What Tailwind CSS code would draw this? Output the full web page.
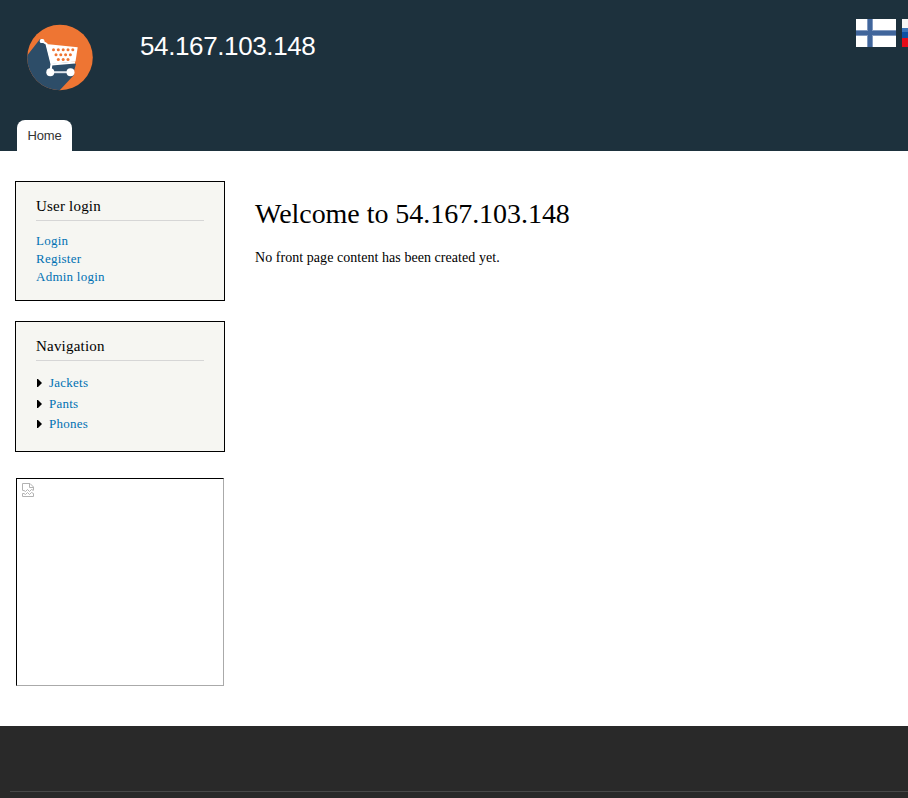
<!DOCTYPE html>
<html lang="en">
<head>
<meta charset="utf-8">
<title>54.167.103.148</title>
<script src="https://cdn.jsdelivr.net/npm/@tailwindcss/browser@4"></script>
</head>
<body class="w-[908px] h-[798px] overflow-hidden bg-white text-black font-['Liberation_Serif',serif]">
<header class="h-[151px] bg-[#1d313d] flex flex-col justify-between overflow-hidden font-['Liberation_Sans',sans-serif]">
  <div class="flex items-start">
    <svg class="w-[90px] h-[85px] ml-[15px] mt-[15px] shrink-0" viewBox="0 0 90 85">
      <defs><clipPath id="disc"><circle cx="45" cy="42.5" r="32.8"/></clipPath></defs>
      <circle cx="45" cy="42.5" r="32.8" fill="#ee7533"/>
      <path clip-path="url(#disc)" fill="#2d4d68" d="M11 42 25 24 59 48 61 49 59 56 59 60 44 76 30 80 5 70Z"/>
      <path fill="#fff" d="M31 29 62.700 32.300 60.500 46.500 36 49Z"/>
      <path fill="none" stroke="#fff" stroke-width="2" d="M26 25.500 31.500 29 36.500 49 35.500 56M36.500 49.500 60 47.500"/>
      <path stroke="#dfe5ec" stroke-width="2" d="M36 57.200H56"/>
      <rect x="24.800" y="24" width="4.500" height="4" rx="1.500" fill="#fff"/>
      <circle cx="35.300" cy="57.300" r="4" fill="#fff"/><circle cx="55.500" cy="57.300" r="4" fill="#fff"/>
      <g fill="#ee7533"><circle cx="38.500" cy="34.800" r="1.500"/><circle cx="43.300" cy="34.800" r="1.500"/><circle cx="48.200" cy="34.800" r="1.500"/><circle cx="53" cy="34.800" r="1.500"/><circle cx="57.800" cy="34.800" r="1.500"/><circle cx="41" cy="39.700" r="1.500"/><circle cx="45.800" cy="39.700" r="1.500"/><circle cx="50.600" cy="39.700" r="1.500"/><circle cx="55.400" cy="39.700" r="1.500"/><circle cx="43.300" cy="44.500" r="1.500"/><circle cx="48.200" cy="44.500" r="1.500"/><circle cx="53" cy="44.500" r="1.500"/></g>
    </svg>
    <div class="ml-[35px] mt-[31px] text-[26px] leading-[30px] tracking-[-0.380px] text-[#fffeff] whitespace-nowrap">54.167.103.148</div>
    <div class="ml-auto mt-[19px] w-[52px] flex gap-[6px] overflow-hidden">
      <svg class="w-[40px] h-[28px] shrink-0" viewBox="0 0 40 28"><path fill="#fff" d="M0 0h40v28H0z"/><path fill="#8199bf" d="M11 0h6v28h-6zM0 11h40v6H0z"/><path fill="#40659b" d="M12 0h4v28h-4zM0 12h40v4H0z"/></svg>
      <svg class="w-[40px] h-[28px] shrink-0" viewBox="0 0 40 28"><path fill="#f5f5f5" d="M0 0h40v9H0z"/><path fill="#3974b8" d="M0 9h40v4H0z"/><path fill="#0b50a3" d="M0 13h40v6H0z"/><path fill="#e50b18" d="M0 19h40v9H0z"/></svg>
    </div>
  </div>
  <nav class="flex pl-[17px]"><a class="w-[55px] h-[31px] rounded-t-[8px] bg-white text-[#333] text-[13px] leading-[31px] tracking-[-0.150px] text-center">Home</a></nav>
</header>
<main class="flex h-[575px]">
  <aside class="w-[210px] ml-[15px] pt-[30px] shrink-0">
    <section class="h-[120px] border border-black bg-[#f6f6f2] px-[20px] pt-[14px] mb-[20px]">
      <h2 class="text-[15px] leading-[20px] h-[25px] border-b border-[#d6d6d6] tracking-[0.200px]">User login</h2>
      <div class="mt-[11px] text-[13px] leading-[18px] text-[#0071b3] tracking-[0.250px]"><div>Login</div><div>Register</div><div>Admin login</div></div>
    </section>
    <section class="h-[131px] border border-black bg-[#f6f6f2] px-[20px] pt-[14px]">
      <h2 class="text-[15px] leading-[20px] h-[25px] border-b border-[#d6d6d6] tracking-[0.200px]">Navigation</h2>
      <ul class="mt-[12px] text-[13px] text-[#0071b3] tracking-[0.250px]">
        <li class="flex items-center h-[20px]"><svg class="w-[5px] h-[8px] ml-px mr-[7px]" viewBox="0 0 5 8"><path d="M0 0h1l4 4-4 4H0z"/></svg>Jackets</li>
        <li class="flex items-center h-[21px]"><svg class="w-[5px] h-[8px] ml-px mr-[7px] mt-px" viewBox="0 0 5 8"><path d="M0 0h1l4 4-4 4H0z"/></svg>Pants</li>
        <li class="flex items-center h-[20px]"><svg class="w-[5px] h-[8px] ml-px mr-[7px]" viewBox="0 0 5 8"><path d="M0 0h1l4 4-4 4H0z"/></svg>Phones</li>
      </ul>
    </section>
    <div class="ml-px mt-[26px] w-[208px] h-[208px] border border-t-black border-l-black border-r-[#aaa] border-b-[#aaa] pl-[5px] pt-[4px]">
      <svg class="w-[12px] h-[14px]" viewBox="0 0 12 14" fill="none" stroke="#b2b2b2"><path d="M0 7.500 .5 7V.5H8L11.500 4V7M7.500 .5V4.500H11.500M.5 7.500H2L3.500 8.500 5.500 6.500 7.500 8.500 9.500 6.500 11.500 7.500M.5 10.500V13.500H11.500V10.500L9.500 9.500 7.500 11.500 5.500 9.500 3.500 11.500 2 10.500Z"/></svg>
    </div>
  </aside>
  <article class="ml-[30px] pt-[45px]">
    <h1 class="text-[28px] leading-[36px] tracking-[-0.040px]">Welcome to 54.167.103.148</h1>
    <p class="mt-[15px] text-[14px] leading-[21px] tracking-[0.050px]">No front page content has been created yet.</p>
  </article>
</main>
<footer class="h-[72px] bg-[#292929] pl-[10px] pt-[65px]"><div class="h-px bg-[#484848]"></div></footer>
</body>
</html>
